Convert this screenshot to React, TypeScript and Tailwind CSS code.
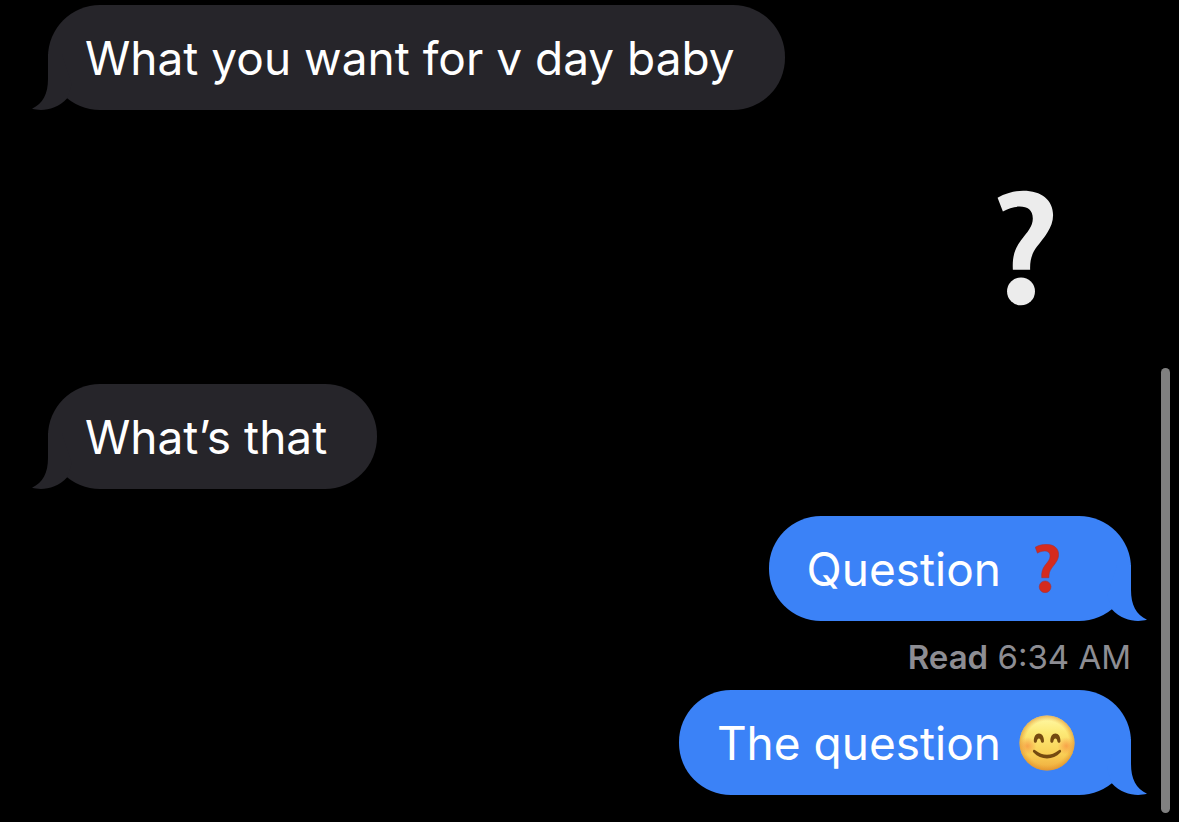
import clsx from "clsx";
import type { ReactNode } from "react";

type Side = "received" | "sent";

interface BubbleProps {
  side: Side;
  className?: string;
  children: ReactNode;
}

function Tail({ side }: { side: Side }) {
  return (
    <svg
      viewBox="0 0 40 56"
      aria-hidden="true"
      className={clsx(
        "absolute bottom-0 h-[56px] w-[40px]",
        side === "sent" ? "-right-4 -scale-x-100 fill-[#3b82f7]" : "-left-4 fill-[#26252a]",
      )}
    >
      <path d="M16 0V25C16 40 11 49.500 0 54.800C10 57.500 24.500 56 35.200 44.300L40 30L30 0Z" />
    </svg>
  );
}

function Bubble({ side, className, children }: BubbleProps) {
  return (
    <li
      className={clsx(
        "relative flex h-[105px] items-center rounded-[52px] text-[46px] leading-[56px] text-white",
        side === "sent" ? "self-end bg-[#3b82f7] pr-[56px] pl-[38px]" : "self-start bg-[#26252a] pr-[50px] pl-[37px]",
        className,
      )}
    >
      <Tail side={side} />
      <div className="relative flex items-center gap-[18px]">{children}</div>
    </li>
  );
}

function QuestionMark({ className }: { className?: string }) {
  return (
    <svg viewBox="50 60 170 349" role="img" aria-label="Question mark" className={className}>
      <path d="M51 83C78 68 105 62 128 62C183 62 218 90 218 135C218 174 190 203 169 231C153 253 148 273 149 300H97C95 264 101 239 121 212C142 185 157 170 157 146C157 121 141 110 118 110C101 110 83 115 67 125Z" />
      <circle cx="121.500" cy="365" r="42" />
    </svg>
  );
}

function SmilingFace() {
  return (
    <svg viewBox="0 0 56 56" role="img" aria-label="Smiling face" className="size-[56px]">
      <defs>
        <linearGradient id="face" x1="0" y1="0" x2="0" y2="1">
          <stop offset="0" stopColor="#fff9a8" />
          <stop offset="0.3" stopColor="#fdea78" />
          <stop offset="0.7" stopColor="#f9d055" />
          <stop offset="1" stopColor="#efa93c" />
        </linearGradient>
        <radialGradient id="rim">
          <stop offset="0.8" stopColor="#e79a2c" stopOpacity="0" />
          <stop offset="1" stopColor="#d9872a" stopOpacity="0.6" />
        </radialGradient>
        <radialGradient id="cheek">
          <stop offset="0" stopColor="#f5803a" stopOpacity="0.6" />
          <stop offset="1" stopColor="#f5803a" stopOpacity="0" />
        </radialGradient>
      </defs>
      <circle cx="28" cy="28" r="27.500" fill="url(#face)" />
      <circle cx="28" cy="28" r="27.500" fill="url(#rim)" />
      <circle cx="8.500" cy="31" r="9" fill="url(#cheek)" />
      <circle cx="47.500" cy="31" r="9" fill="url(#cheek)" />
      <g fill="#754a10">
        <path d="M14.800 26C14.800 21.500 16.800 18.400 19.900 18.400C23 18.400 25 21.500 25 26C25 28.400 22.300 28.400 21.900 26.200C21.600 24.500 21 23.400 19.900 23.400C18.800 23.400 18.200 24.500 17.900 26.200C17.500 28.400 14.800 28.400 14.800 26Z" />
        <path d="M31.300 26C31.300 21.500 33.300 18.400 36.400 18.400C39.500 18.400 41.500 21.500 41.500 26C41.500 28.400 38.800 28.400 38.400 26.200C38.100 24.500 37.500 23.400 36.400 23.400C35.300 23.400 34.700 24.500 34.400 26.200C34 28.400 31.300 28.400 31.300 26Z" />
        <path d="M14.200 35.200C13.500 36.300 14.100 37 14.800 37.800C21.500 45.400 34.500 45.400 41.200 37.800C41.900 37 42.500 36.300 41.800 35.200C41 34.300 40.200 34.800 39.400 35.500C32.700 41.200 23.300 41.200 16.600 35.500C15.800 34.800 15 34.300 14.200 35.200Z" />
      </g>
    </svg>
  );
}

export default function App() {
  return (
    <main className="relative min-h-screen bg-black font-['Inter',sans-serif]">
      <ol className="flex flex-col pt-[5px] pr-12 pb-6 pl-12">
        <Bubble side="received">What you want for v day baby</Bubble>

        <li className="mt-20 mr-[77px] self-end">
          <QuestionMark className="h-[116px] w-[57px] fill-[#ececec]" />
        </li>

        <Bubble side="received" className="mt-[78px]">
          What’s that
        </Bubble>

        <Bubble side="sent" className="mt-[27px]">
          Question
          <span className="flex w-[56px] justify-center">
            <QuestionMark className="h-[49px] w-[24px] fill-[#d52b1e] stroke-[#9c3440] stroke-[4px]" />
          </span>
        </Bubble>

        <li className="mt-4 self-end text-[33px] leading-10 text-[#8d8d93]">
          <span className="font-semibold">Read</span> <time>6:34 AM</time>
        </li>

        <Bubble side="sent" className="mt-[13px]">
          The question
          <SmilingFace />
        </Bubble>
      </ol>

      <div className="absolute right-[9px] bottom-[9px] h-[445px] w-[9px] rounded-full bg-[#808080]" />
    </main>
  );
}
